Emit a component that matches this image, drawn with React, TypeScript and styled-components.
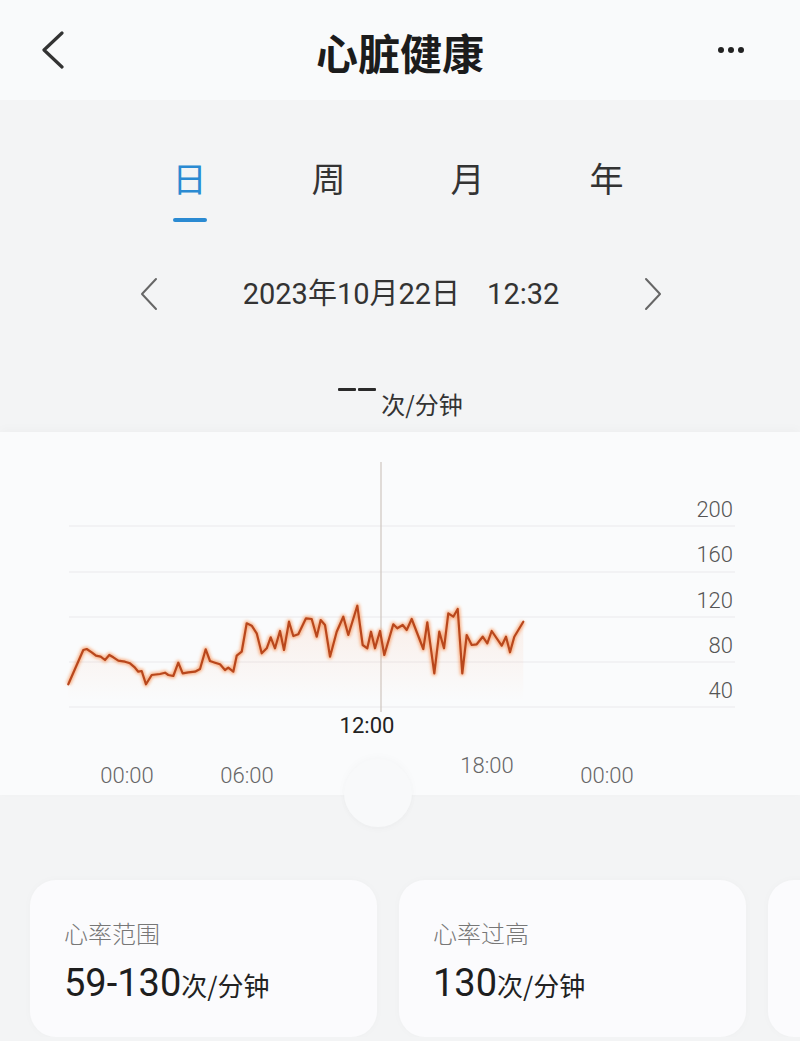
import React from 'react';
import styled, { createGlobalStyle } from 'styled-components';

const GlobalStyle = createGlobalStyle`
  html, body {
    margin: 0;
    padding: 0;
    background: #f3f4f5;
  }
  body {
    width: 800px;
    overflow: hidden;
    font-family: Roboto, "Noto Sans CJK SC", sans-serif;
    color: #333;
  }
`;

// heart-rate samples traced in page coordinates (x, y)
const samples: [number, number][] = [
  [68.3, 684.3], [83.3, 650], [86.7, 649], [91.7, 652.3], [96, 655.7], [100.7, 656.7],
  [105, 660], [109.3, 655], [113.3, 657.3], [118.3, 660.7], [125, 661.7], [130, 663.3],
  [135, 667.7], [138.3, 671.7], [141.7, 671], [146, 684.3], [151.7, 675], [160, 674],
  [165, 672.7], [168.3, 675], [173.3, 676], [178.3, 662.7], [182.7, 673.3], [188.3, 672.3],
  [195, 671.7], [200, 669], [205.7, 649.3], [210, 661], [215, 662.7], [220, 664.3],
  [225, 670], [228.3, 667.7], [233.3, 671.7], [236.7, 655.7], [241.7, 651.7], [246.7, 623.3],
  [251.7, 625.7], [256.7, 633.3], [261.7, 653.3], [266.7, 648.3], [270.7, 637.3], [275, 648.3],
  [280, 631], [284, 650], [289, 621.7], [293.3, 636], [298.3, 634.3], [306, 618.3],
  [311.7, 619], [316.7, 636.7], [320.7, 620], [325, 625], [330, 656.7], [336.7, 631.7],
  [343.3, 616.7], [348.3, 635], [357.3, 605.7], [362.7, 645], [367.3, 648.3], [371, 631.7],
  [375, 648.3], [380, 631], [384.3, 655], [393.3, 624.3], [397.3, 628.3], [402.7, 625],
  [406.7, 630], [411.7, 619], [423.3, 649], [427.3, 622.3], [434.3, 673.3], [439.3, 631.7],
  [444, 648.3], [448.3, 613.3], [453.3, 616.7], [457.7, 609], [462.3, 673.3], [466.7, 635],
  [471.7, 645], [476.7, 644.3], [482.7, 636.7], [487.3, 643.3], [491.7, 631], [501.7, 645.7],
  [506, 636.7], [510, 652.3], [514.3, 636.7], [523.3, 621.7],
];

const gridLines = [526, 572, 617, 662, 707];
const yLabels = [
  { text: '200', y: 517 },
  { text: '160', y: 562 },
  { text: '120', y: 608 },
  { text: '80', y: 653 },
  { text: '40', y: 698 },
];
const hourLabels = [
  { text: '00:00', x: 127, y: 783 },
  { text: '06:00', x: 247, y: 783 },
  { text: '18:00', x: 487, y: 773 },
  { text: '00:00', x: 607, y: 783 },
];

const tabs = ['日', '周', '月', '年'];

// the third card is scrolled almost entirely out of view
const cards = [
  { label: '心率范围', value: '59-130' },
  { label: '心率过高', value: '130' },
  { label: '', value: '' },
];

const Page = styled.div`
  width: 800px;
  min-height: 1041px;
  background: #f3f4f5;
`;

const Header = styled.header`
  height: 100px;
  display: grid;
  grid-template-columns: 1fr auto 1fr;
  align-items: center;
  padding: 0 48px;
  background: #f9fafb;
`;

const IconButton = styled.button<{ $align?: 'start' | 'end' }>`
  justify-self: ${p => (p.$align === 'end' ? 'end' : 'start')};
  margin: ${p => (p.$align === 'end' ? '0 8px 0 0' : '0 0 0 -6px')};
  display: flex;
  align-items: center;
  padding: 0;
  border: 0;
  background: none;
`;

const Title = styled.h1`
  margin: 4px 0 0;
  font-family: "Noto Sans CJK SC", sans-serif;
  font-size: 42px;
  font-weight: 700;
  line-height: 1;
  color: #1c1c1c;
`;

const Dots = styled.div`
  display: flex;
  gap: 4px;
  span {
    width: 6px;
    height: 6px;
    border-radius: 50%;
    background: #222;
  }
`;

const Summary = styled.section`
  padding: 58px 0 14px;
`;

const TabBar = styled.div`
  display: flex;
  justify-content: center;
  padding-right: 4px;
`;

const Tab = styled.div<{ $active?: boolean }>`
  width: 139px;
  display: flex;
  flex-direction: column;
  align-items: center;
  font-family: "Noto Sans CJK SC", sans-serif;
  font-size: 34px;
  line-height: 40px;
  color: ${p => (p.$active ? '#2a8ad2' : '#333')};
  &::after {
    content: '';
    width: 34px;
    height: 4px;
    margin-top: 20px;
    border-radius: 2px;
    background: ${p => (p.$active ? '#2a8ad2' : 'transparent')};
  }
`;

const DateRow = styled.div`
  margin-top: 52px;
  height: 40px;
  display: flex;
  align-items: center;
  justify-content: center;
  gap: 85px;
  padding-left: 2px;
`;

const DateText = styled.div`
  font-size: 29px;
  line-height: 40px;
  color: #333;
  span {
    margin-left: 27px;
  }
`;

const Current = styled.div`
  margin-top: 74px;
  height: 30px;
  display: flex;
  justify-content: center;
`;

const Dash = styled.i`
  display: block;
  width: 18px;
  height: 3px;
  margin: 0 1px;
  background: #2a2a2a;
  border-radius: 1px;
`;

const Unit = styled.span`
  font-family: "Noto Sans CJK SC", sans-serif;
  font-size: 24px;
  line-height: 30px;
  color: #333;
`;

const CurrentUnit = styled(Unit)`
  margin-left: 4px;
  transform: translateY(1px);
`;

const ChartPanel = styled.section`
  position: relative;
  z-index: 1;
  height: 363px;
  background: #fafbfc;
  box-shadow: 0 -3px 10px rgba(0, 0, 0, 0.025);
  svg {
    display: block;
  }
`;

const Knob = styled.div`
  position: absolute;
  left: 344px;
  top: 327px;
  width: 68px;
  height: 68px;
  border-radius: 50%;
  background: #f8f9fa;
  box-shadow: 0 -2px 8px rgba(0, 0, 0, 0.025), 0 3px 6px rgba(0, 0, 0, 0.02);
`;

const Bottom = styled.section`
  padding: 85px 0 0 30px;
  display: flex;
  gap: 22px;
  overflow: hidden;
`;

const Card = styled.div`
  flex: 0 0 347px;
  height: 157px;
  box-sizing: border-box;
  padding: 37px 0 0 34px;
  border-radius: 26px;
  background: #fbfbfd;
  box-shadow: 0 0 8px rgba(0, 0, 0, 0.025);
`;

const CardLabel = styled.div`
  font-family: "Noto Sans CJK SC", sans-serif;
  font-size: 24px;
  line-height: 32px;
  color: #777;
  font-weight: 300;
`;

const CardValue = styled.div`
  margin-top: 12px;
  display: flex;
  align-items: baseline;
  font-size: 38px;
  line-height: 44px;
  color: #1e1e1e;
  ${Unit} {
    font-size: 26px;
    color: #222;
  }
`;

const BackIcon = () => (
  <svg width="24" height="40" viewBox="0 0 24 40">
    <path d="M20 3 L2 20 L20 37" fill="none" stroke="#333" strokeWidth="3.2" strokeLinecap="round" strokeLinejoin="round" />
  </svg>
);

const Chevron: React.FC<{ dir: 'left' | 'right' }> = ({ dir }) => (
  <svg width="18" height="34" viewBox="0 0 18 34">
    <path
      d={dir === 'left' ? 'M16 2 L2 17 L16 32' : 'M2 2 L16 17 L2 32'}
      fill="none"
      stroke="#666"
      strokeWidth="2"
      strokeLinecap="round"
      strokeLinejoin="round"
    />
  </svg>
);

const HeartChart = () => {
  const line = samples.map(([x, y]) => `${x},${y}`).join(' ');
  const area = `M${samples[0][0]},700 L${line.replace(/ /g, ' L')} L${samples[samples.length - 1][0]},700 Z`;
  return (
    <svg width="800" height="363" viewBox="0 432 800 363">
      <defs>
        <linearGradient id="hrFill" x1="0" y1="600" x2="0" y2="700" gradientUnits="userSpaceOnUse">
          <stop offset="0" stopColor="#f6a57c" stopOpacity="0.18" />
          <stop offset="1" stopColor="#f6a57c" stopOpacity="0" />
        </linearGradient>
        <filter id="glow" x="-10%" y="-50%" width="120%" height="200%">
          <feGaussianBlur stdDeviation="1.6" />
        </filter>
      </defs>
      {gridLines.map(y => (
        <line key={y} x1="69" x2="735" y1={y} y2={y} stroke="#e9e9ec" strokeWidth="1.2" />
      ))}
      <line x1="381" x2="381" y1="462" y2="712" stroke="#cfc6bf" strokeWidth="1.2" />
      <path d={area} fill="url(#hrFill)" />
      <polyline points={line} fill="none" stroke="#f7863f" strokeWidth="5" strokeOpacity="0.6" strokeLinejoin="round" filter="url(#glow)" />
      <polyline points={line} fill="none" stroke="#b9471c" strokeWidth="2.2" strokeLinejoin="round" strokeLinecap="round" />
      <g fontFamily="Roboto, sans-serif" fontSize="22" fill="#555" fontWeight="300">
        {yLabels.map(l => (
          <text key={l.text} x="733" y={l.y} textAnchor="end">{l.text}</text>
        ))}
      </g>
      <text x="367" y="733" textAnchor="middle" fontFamily="Roboto, sans-serif" fontSize="22" fill="#222">12:00</text>
      <g fontFamily="Roboto, sans-serif" fontSize="22" fill="#666" fontWeight="300">
        {hourLabels.map(l => (
          <text key={l.x} x={l.x} y={l.y} textAnchor="middle">{l.text}</text>
        ))}
      </g>
    </svg>
  );
};

export default function App() {
  return (
    <Page>
      <GlobalStyle />
      <Header>
        <IconButton>
          <BackIcon />
        </IconButton>
        <Title>心脏健康</Title>
        <IconButton $align="end">
          <Dots>
            <span />
            <span />
            <span />
          </Dots>
        </IconButton>
      </Header>

      <Summary>
        <TabBar>
          {tabs.map((t, i) => (
            <Tab key={t} $active={i === 0}>{t}</Tab>
          ))}
        </TabBar>
        <DateRow>
          <Chevron dir="left" />
          <DateText>
            2023年10月22日<span>12:32</span>
          </DateText>
          <Chevron dir="right" />
        </DateRow>
        <Current>
          <Dash />
          <Dash />
          <CurrentUnit>次/分钟</CurrentUnit>
        </Current>
      </Summary>

      <ChartPanel>
        <HeartChart />
        <Knob />
      </ChartPanel>

      <Bottom>
        {cards.map((c, i) => (
          <Card key={i}>
            {c.label && <CardLabel>{c.label}</CardLabel>}
            {c.value && (
              <CardValue>
                {c.value}
                <Unit>次/分钟</Unit>
              </CardValue>
            )}
          </Card>
        ))}
      </Bottom>
    </Page>
  );
}
